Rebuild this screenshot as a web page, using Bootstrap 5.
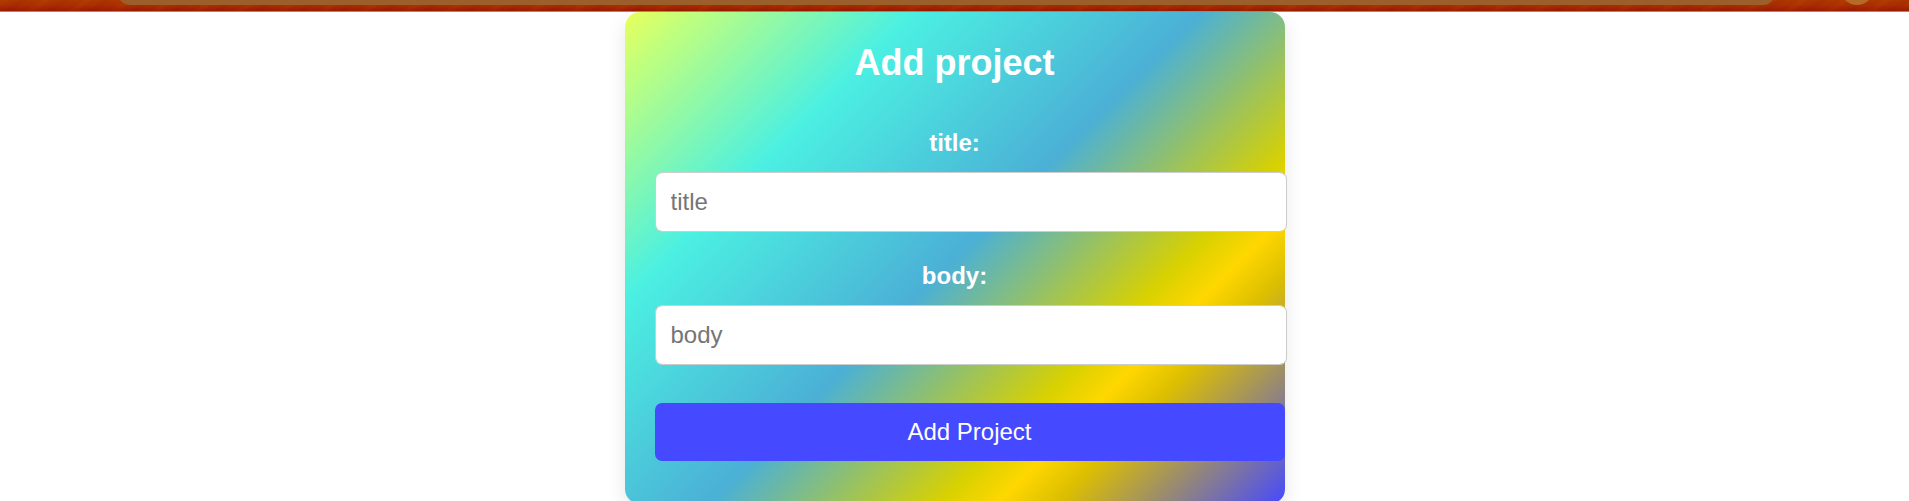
<!DOCTYPE html>
<html lang="en">
<head>
<meta charset="utf-8">
<meta name="viewport" content="width=device-width, initial-scale=1">
<title>Add project</title>
<link rel="stylesheet" href="https://cdn.jsdelivr.net/npm/bootstrap@5.3.0/dist/css/bootstrap.min.css">
<style>
  body { font-family: "Liberation Sans", Arial, sans-serif; overflow: hidden; }
  .top-strip {
    height: 12px;
    padding: 0 35px 6px 118px;
    gap: 65px;
    border-bottom: 1px solid #d27b4a;
    background:
      repeating-linear-gradient(145deg, rgba(255, 120, 0, .06) 0 5px, transparent 5px 11px, rgba(90, 0, 0, .06) 11px 16px, transparent 16px 24px),
      linear-gradient(#ae3800, #a92e00 50%, #9c1a00);
  }
  .strip-field { height: 32px; border-radius: 12px; background: #9a5f2b; }
  .strip-dot { width: 34px; height: 34px; background: #b66a28; }
  .project-card {
    width: 660px;
    max-width: 100%;
    padding: 29px 30px 43px;
    border-radius: 15px;
    box-shadow: 0 8px 20px rgba(0, 0, 0, .1);
    background: linear-gradient(135deg, #e9ff5c 0%, #c0ff7e 6%, #4bf0e2 25%, #4bb0d6 50%, #d9d100 70%, #ffd700 75%, #dcbf00 80%, #4549ff 100%);
  }
  .project-card h1 { font-size: 36px; line-height: 44px; margin-bottom: 44px; }
  .project-card label { font-size: 24px; line-height: 28px; margin-bottom: 15px; }
  .project-card .form-control {
    width: calc(100% + 32px);
    height: 60px;
    padding: 15px;
    font-size: 24px;
    line-height: 28px;
    border: 1px solid #ccc;
    border-radius: 7px;
  }
  .project-card .form-control::placeholder { color: #757575; }
  .field-group { margin-bottom: 30px; }
  .project-card .btn {
    width: calc(100% + 30px);
    height: 58px;
    margin-top: 8px;
    padding: 0;
    font-size: 24px;
    line-height: 28px;
    border: 0;
    border-radius: 7px;
    background: #4549ff;
  }
</style>
</head>
<body>
<header class="top-strip d-flex align-items-end overflow-hidden">
  <div class="strip-field flex-grow-1"></div>
  <div class="strip-dot rounded-circle flex-shrink-0"></div>
</header>
<main class="project-card mx-auto text-center text-white">
  <h1 class="fw-bold">Add project</h1>
  <form>
    <div class="field-group">
      <label class="d-block fw-bold" for="title">title:</label>
      <input class="form-control" type="text" id="title" placeholder="title">
    </div>
    <div class="field-group">
      <label class="d-block fw-bold" for="body">body:</label>
      <input class="form-control" type="text" id="body" placeholder="body">
    </div>
    <button class="btn text-white" type="submit">Add Project</button>
  </form>
</main>
<script src="https://cdn.jsdelivr.net/npm/bootstrap@5.3.0/dist/js/bootstrap.bundle.min.js"></script>
</body>
</html>
